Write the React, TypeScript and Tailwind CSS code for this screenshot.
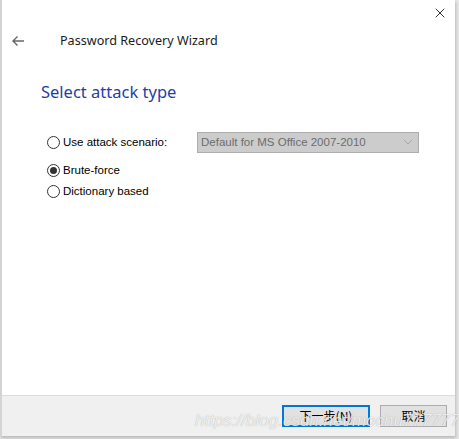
import {X} from "lucide-react";

function Radio({checked, label}: {checked?: boolean; label: string}) {
  return (
    <label className="flex items-center gap-[3px] font-['Liberation_Sans',sans-serif] text-[11.5px] text-black">
      <span className="flex h-[13px] w-[13px] items-center justify-center rounded-full border border-[#333] bg-white">
        {checked && <span className="h-[7px] w-[7px] rounded-full bg-[#333]" />}
      </span>
      {label}
    </label>
  );
}

export default function App() {
  return (
    <div className="h-[439px] w-[459px] bg-[#e6e6e6] font-['Noto_Sans',sans-serif]">
      <div className="relative flex h-[436px] w-[455px] flex-col border-l-2 border-[#d4d4d4] bg-white shadow-[1px_2px_3px_rgba(0,0,0,0.2)]">
        <div className="flex h-[30px] justify-end pr-[7px] pt-[5px]">
          <X size={16} strokeWidth={1.2} className="text-black" />
        </div>

        <div className="flex items-center pl-[9px] pt-[2px]">
          <svg width="14" height="14" viewBox="0 0 14 14" className="text-[#666]">
            <path d="M13 7H2M6.5 2.5L2 7l4.5 4.5" fill="none" stroke="currentColor" strokeWidth="1.4" />
          </svg>
          <div className="ml-[35px] text-[12.6px] text-[#1a1a1a]">Password Recovery Wizard</div>
        </div>

        <div className="mt-[29px] pl-[39px] text-[16.5px] text-[#1f3fa6]">Select attack type</div>

        <div className="mt-[27px] flex items-center pl-[45px]">
          <div className="w-[150px]">
            <Radio label="Use attack scenario:" />
          </div>
          <div className="flex h-[21px] w-[222px] items-center justify-between border border-[#adadad] bg-[#cccccc] px-[3px] font-['Liberation_Sans',sans-serif] text-[11.5px] text-[#6d6d6d]">
            <span>Default for MS Office 2007-2010</span>
            <svg width="10" height="6" viewBox="0 0 10 6" className="mr-[2px]">
              <path d="M1 1l4 4 4-4" fill="none" stroke="#a8a8a8" strokeWidth="1" />
            </svg>
          </div>
        </div>

        <div className="mt-[9px] flex flex-col gap-[4px] pl-[45px]">
          <Radio checked label="Brute-force" />
          <Radio label="Dictionary based" />
        </div>

        <div className="flex-1" />

        <div className="relative flex h-[41px] items-center justify-end gap-[10px] border-t border-[#dcdcdc] bg-[#f0f0f0] pr-[8px]">
          <button className="h-[22px] w-[88px] border-2 border-[#0078d7] bg-[#e1e1e1] text-[12px] text-black font-['Noto_Sans_CJK_SC',sans-serif]">
            下一步(N)
          </button>
          <button className="h-[22px] w-[67px] border border-[#adadad] bg-[#e1e1e1] text-[12px] text-black font-['Noto_Sans_CJK_SC',sans-serif]">
            取消
          </button>
          <div className="pointer-events-none absolute left-[193px] top-[12px] whitespace-nowrap font-['Liberation_Sans',sans-serif] text-[17px] italic text-white/80 [text-shadow:0_0_1px_rgba(0,0,0,0.35)]">
            https://blog.csdn.net/mochu7777777
          </div>
        </div>
      </div>
    </div>
  );
}
